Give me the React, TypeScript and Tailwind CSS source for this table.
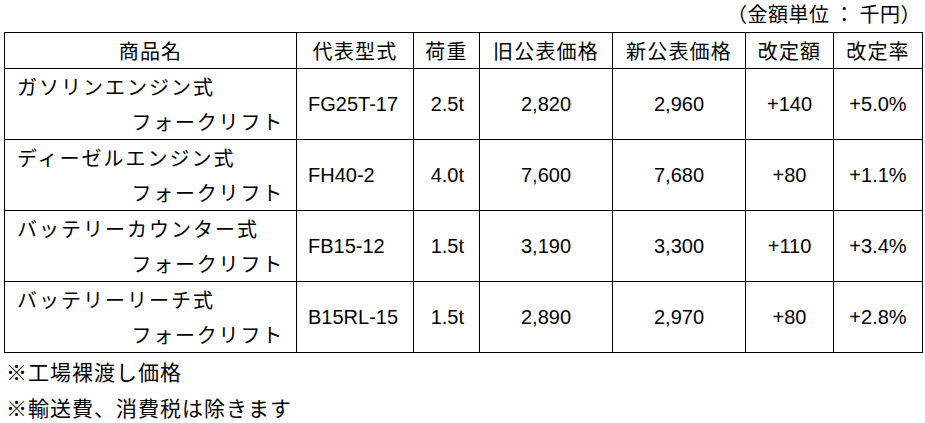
import React from "react";

type Row = {
    line1: string;
    line2: string;
    model: string;
    load: string;
    oldPrice: string;
    newPrice: string;
    diff: string;
    rate: string;
};

const rows: Row[] = [
    { line1: "ガソリンエンジン式", line2: "フォークリフト", model: "FG25T-17", load: "2.5t", oldPrice: "2,820", newPrice: "2,960", diff: "+140", rate: "+5.0%" },
    { line1: "ディーゼルエンジン式", line2: "フォークリフト", model: "FH40-2", load: "4.0t", oldPrice: "7,600", newPrice: "7,680", diff: "+80", rate: "+1.1%" },
    { line1: "バッテリーカウンター式", line2: "フォークリフト", model: "FB15-12", load: "1.5t", oldPrice: "3,190", newPrice: "3,300", diff: "+110", rate: "+3.4%" },
    { line1: "バッテリーリーチ式", line2: "フォークリフト", model: "B15RL-15", load: "1.5t", oldPrice: "2,890", newPrice: "2,970", diff: "+80", rate: "+2.8%" },
];

const headers = ["商品名", "代表型式", "荷重", "旧公表価格", "新公表価格", "改定額", "改定率"];

const jp = "font-['Noto_Sans_CJK_JP',sans-serif]";
const num = "font-['Liberation_Sans','Noto_Sans_CJK_JP',sans-serif]";

export default function App() {
    return (
        <div className={`w-[925px] h-[423px] bg-white text-black ${jp}`}>
            <div className="h-[32px] w-[925px] flex justify-end pr-[4px] text-[20px] leading-[28px] tracking-[0.5px]">
                <span>（金額単位</span>
                <span className="w-[30px] text-center">：</span>
                <span>千円）</span>
            </div>
            <table className="ml-[4px] w-[918px] table-fixed border-collapse">
                <colgroup>
                    <col className="w-[292px]" />
                    <col className="w-[117px]" />
                    <col className="w-[66px]" />
                    <col className="w-[133px]" />
                    <col className="w-[133px]" />
                    <col className="w-[88px]" />
                    <col className="w-[89px]" />
                </colgroup>
                <thead>
                    <tr className="h-[36px]">
                        {headers.map((h) => (
                            <th key={h} className="border border-black p-0 text-center font-normal text-[20px] leading-[34px] tracking-[1.2px]">{h}</th>
                        ))}
                    </tr>
                </thead>
                <tbody>
                    {rows.map((r) => (
                        <tr key={r.line1} className="h-[71px]">
                            <td className="border border-black p-0 text-[20px]">
                                <div className="pl-[12px] leading-[35px] tracking-[2px]">{r.line1}</div>
                                <div className="pr-[12px] text-right leading-[35px] tracking-[1.8px]">{r.line2}</div>
                            </td>
                            <td className={`border border-black p-0 pl-[11px] text-left text-[20px] ${num}`}>{r.model}</td>
                            <td className={`border border-black p-0 pr-[15px] text-right text-[20px] ${num}`}>{r.load}</td>
                            <td className={`border border-black p-0 text-center text-[20px] ${num}`}>{r.oldPrice}</td>
                            <td className={`border border-black p-0 text-center text-[20px] ${num}`}>{r.newPrice}</td>
                            <td className={`border border-black p-0 text-center text-[20px] ${num}`}>{r.diff}</td>
                            <td className={`border border-black p-0 text-center text-[20px] ${num}`}>{r.rate}</td>
                        </tr>
                    ))}
                </tbody>
            </table>
            <div className="pl-[6px] text-[21px] leading-[36px] tracking-[1px]">
                <p>※工場裸渡し価格</p>
                <p>※輸送費、消費税は除きます</p>
            </div>
        </div>
    );
}
